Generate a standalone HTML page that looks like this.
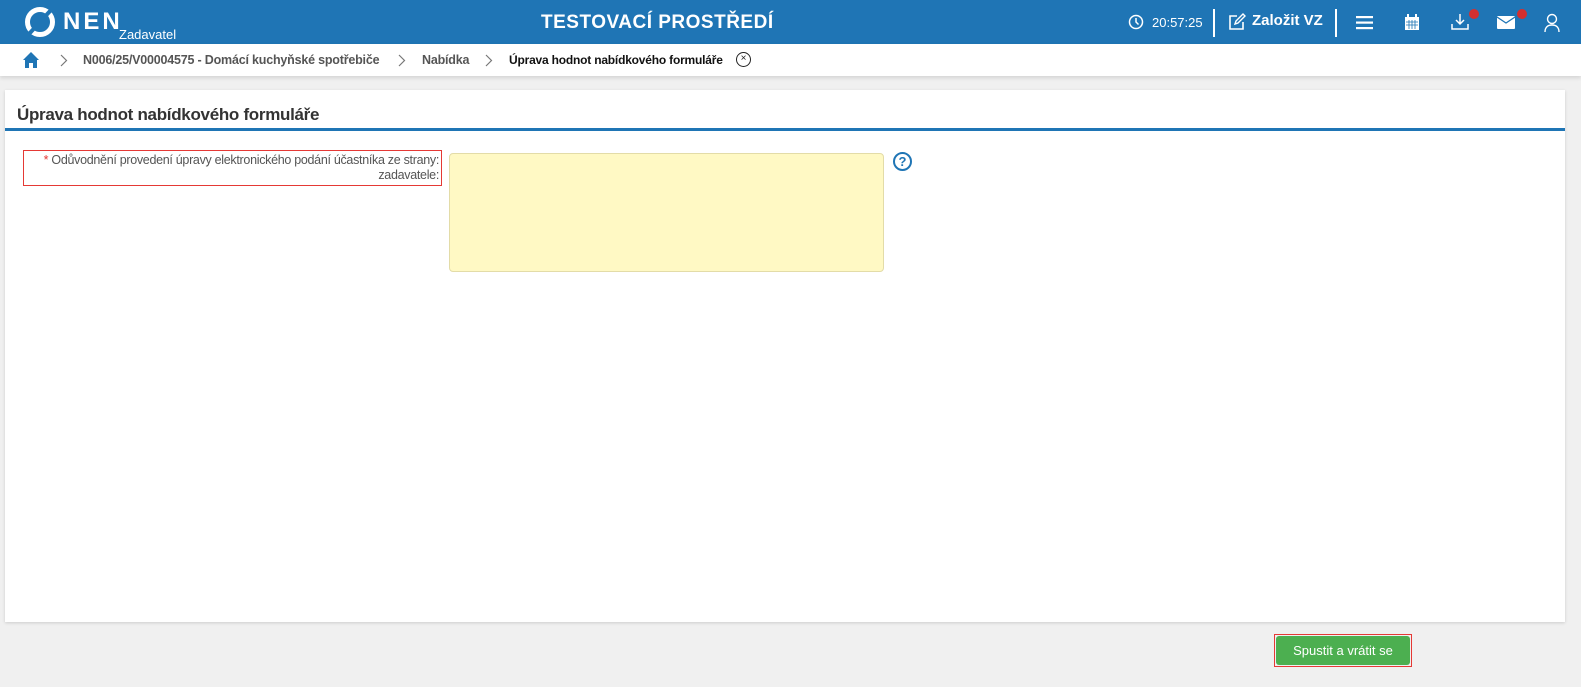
<!DOCTYPE html>
<html><head><meta charset="utf-8"><style>
*{box-sizing:border-box;margin:0;padding:0}
body{width:1581px;height:687px;background:#f0f0f0;font-family:"Liberation Sans",sans-serif;position:relative;overflow:hidden}
.hdr{position:absolute;left:0;top:0;width:1581px;height:44px;background:#1f75b5;color:#fff}
.abs{position:absolute}
.bc{position:absolute;left:0;top:44px;width:1581px;height:32px;background:#fff;box-shadow:0 2px 4px rgba(0,0,0,.12);font-size:12.5px;font-weight:bold;color:#555;letter-spacing:-.2px}
.card{position:absolute;left:5px;top:90px;width:1560px;height:532px;background:#fff;box-shadow:0 1px 3px rgba(0,0,0,.15)}
</style></head><body>
<div class="hdr">
 <svg class="abs" style="left:24px;top:7px" width="32" height="30" viewBox="0 0 32 30"><circle cx="16" cy="15" r="12.5" fill="none" stroke="#fff" stroke-width="5"/><path d="M5 27 L27 3" stroke="#1f75b5" stroke-width="4"/></svg>
 <div class="abs" style="left:63px;top:8px;font-size:24px;font-weight:bold;letter-spacing:3px">NEN</div>
 <div class="abs" style="left:119px;top:27px;font-size:13px">Zadavatel</div>
 <div class="abs" style="left:541px;top:12px;font-size:19px;font-weight:bold;letter-spacing:.5px">TESTOVACÍ PROSTŘEDÍ</div>
 <svg class="abs" style="left:1128px;top:14px" width="16" height="16" viewBox="0 0 16 16"><circle cx="8" cy="8" r="6.5" fill="none" stroke="#fff" stroke-width="1.5"/><path d="M8 4v4l2.5 2.5" fill="none" stroke="#fff" stroke-width="1.5"/></svg>
 <div class="abs" style="left:1152px;top:15px;font-size:13px">20:57:25</div>
 <div class="abs" style="left:1213px;top:9px;width:2px;height:28px;background:#fff"></div>
 <svg class="abs" style="left:1228px;top:13px" width="18" height="18" viewBox="0 0 18 18"><path d="M9 3H2v13h13V9" fill="none" stroke="#fff" stroke-width="1.6"/><path d="M7 11l1-3 7-7 2 2-7 7z" fill="none" stroke="#fff" stroke-width="1.4"/></svg>
 <div class="abs" style="left:1252px;top:12px;font-size:15px;font-weight:bold">Založit VZ</div>
 <div class="abs" style="left:1335px;top:9px;width:2px;height:28px;background:#fff"></div>
 <svg class="abs" style="left:1356px;top:15px" width="18" height="15"><rect y="1" width="17" height="2.2" fill="#fff"/><rect y="6.5" width="17" height="2.2" fill="#fff"/><rect y="12" width="17" height="2.2" fill="#fff"/></svg>
 <svg class="abs" style="left:1404px;top:14px" width="16" height="17" viewBox="0 0 16 17"><rect x="1" y="3" width="14" height="13" fill="#fff"/><rect x="3" y="0" width="2" height="4" fill="#fff"/><rect x="11" y="0" width="2" height="4" fill="#fff"/><path d="M2 8h12M2 11h12M5 6v9M8 6v9M11 6v9" stroke="#1f75b5" stroke-width=".8"/></svg>
 <svg class="abs" style="left:1451px;top:13px" width="18" height="18" viewBox="0 0 18 18"><path d="M9 1v9M5 7l4 4 4-4" fill="none" stroke="#fff" stroke-width="1.5"/><path d="M1 11v5h16v-5" fill="none" stroke="#fff" stroke-width="1.5"/></svg>
 <div class="abs" style="left:1469px;top:9px;width:10px;height:10px;border-radius:50%;background:#d32f2f"></div>
 <svg class="abs" style="left:1497px;top:16px" width="18" height="13"><rect width="18" height="13" rx="1" fill="#fff"/><path d="M0 1l9 6 9-6" fill="none" stroke="#1f75b5" stroke-width="1.2"/></svg>
 <div class="abs" style="left:1517px;top:9px;width:10px;height:10px;border-radius:50%;background:#d32f2f"></div>
 <svg class="abs" style="left:1544px;top:13px" width="16" height="19" viewBox="0 0 16 19"><circle cx="8" cy="6" r="4.5" fill="none" stroke="#fff" stroke-width="1.4"/><path d="M1 19c0-5 3-7 7-7s7 2 7 7" fill="none" stroke="#fff" stroke-width="1.4"/></svg>
</div>
<div class="bc">
 <svg class="abs" style="left:22px;top:7px" width="18" height="17" viewBox="0 0 18 17"><path d="M9 1L1 9h2v8h4v-5h4v5h4V9h2z" fill="#1f75b5"/></svg>
 <svg class="abs" style="left:60px;top:10px" width="8" height="13"><path d="M1 1l5.5 5.5L1 12" fill="none" stroke="#777" stroke-width="1.2"/></svg>
 <div class="abs" style="left:83px;top:9px">N006/25/V00004575 - Domácí kuchyňské spotřebiče</div>
 <svg class="abs" style="left:398px;top:10px" width="8" height="13"><path d="M1 1l5.5 5.5L1 12" fill="none" stroke="#777" stroke-width="1.2"/></svg>
 <div class="abs" style="left:422px;top:9px">Nabídka</div>
 <svg class="abs" style="left:485px;top:10px" width="8" height="13"><path d="M1 1l5.5 5.5L1 12" fill="none" stroke="#777" stroke-width="1.2"/></svg>
 <div class="abs" style="left:509px;top:9px;color:#111;font-size:12px">Úprava hodnot nabídkového formuláře</div>
 <div class="abs" style="left:736px;top:8px;width:15px;height:15px;border:1.3px solid #222;border-radius:50%;font-size:10px;line-height:12px;text-align:center;color:#222;font-weight:normal">×</div>
</div>
<div class="card">
 <div class="abs" style="left:12px;top:15px;font-size:17px;font-weight:bold;color:#333;letter-spacing:-.3px">Úprava hodnot nabídkového formuláře</div>
 <div class="abs" style="left:0;top:38px;width:1560px;height:3px;background:#1f75b5"></div>
 <div class="abs" style="left:18px;top:60px;width:419px;height:36px;border:1px solid #e53935;font-size:12.5px;color:#555;text-align:right;padding:2px 2px 0 0;line-height:15px;letter-spacing:-.3px"><span style="color:#e53935">*</span> Odůvodnění provedení úpravy elektronického podání účastníka ze strany:<br>zadavatele:</div>
 <div class="abs" style="left:444px;top:63px;width:435px;height:119px;background:#fff9c4;border:1px solid #e3dca8;border-radius:4px"></div>
 <div class="abs" style="left:888px;top:62px;width:19px;height:19px;border:2px solid #1f75b5;border-radius:50%;color:#1f75b5;font-size:13px;font-weight:bold;text-align:center;line-height:15px">?</div>
</div>
<div class="abs" style="left:1274px;top:634px;width:138px;height:33px;border:1px solid #e53935;padding:1px"><div style="width:100%;height:100%;background:#4caf50;border-radius:3px;color:#fff;font-size:13px;text-align:center;line-height:29px">Spustit a vrátit se</div></div>
</body></html>
